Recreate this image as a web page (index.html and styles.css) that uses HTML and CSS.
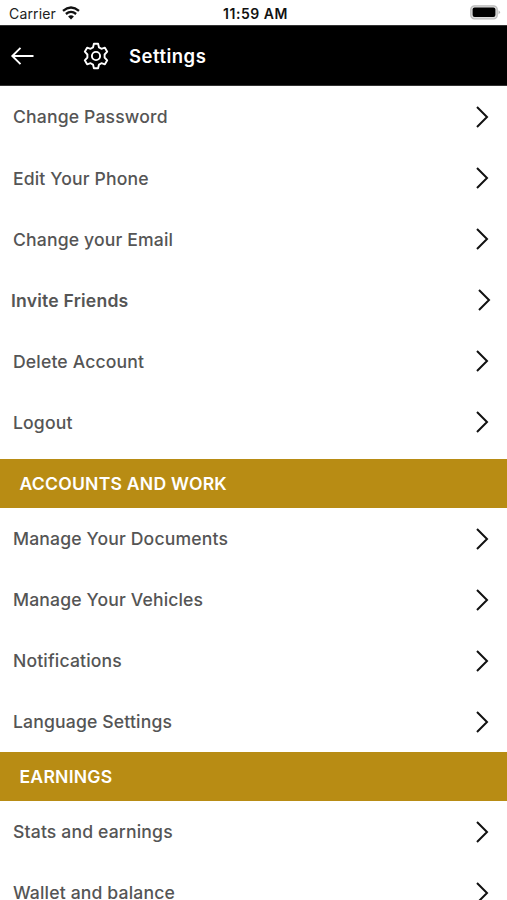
FILE: index.html
```html
<!DOCTYPE html>
<html lang="en">
<head>
<meta charset="utf-8">
<title>Settings</title>
<link rel="stylesheet" href="styles.css">
</head>
<body>
<svg class="defs" aria-hidden="true"><symbol id="chev" viewBox="0 0 14 24"><path d="M2 2l10 10L2 22" fill="none" stroke="#111" stroke-width="2"/></symbol></svg>
<div class="status">
  <div class="carrier"><span>Carrier</span>
    <svg class="wifi" viewBox="0 0 18 14"><g fill="none" stroke="#111" stroke-width="2.3"><path d="M1 4.800Q9-1.900 17 4.800"/><path d="M3.900 8Q9 3.700 14.100 8"/></g><path d="M6.100 10.500Q9 8 11.900 10.500L9 13.600z" fill="#111"/></svg>
  </div>
  <div class="time">11:59 AM</div>
  <svg class="battery" viewBox="0 0 31 15"><rect x=".8" y=".8" width="26.400" height="13" rx="3.600" fill="#ddd" stroke="#bbb" stroke-width="1.300"/><rect x="2.600" y="2.600" width="22.800" height="9.400" rx="2" fill="#000"/><path d="M28.500 5.200q3 2.100 0 4.200z" fill="#b5b5b5"/></svg>
</div>
<header class="bar">
  <svg class="back" viewBox="0 0 24 20"><path d="M23.500 10H2.500M10.500 1.800L2.300 10l8.200 8.200" fill="none" stroke="#fff" stroke-width="1.900"/></svg>
  <svg class="gear" viewBox="0 0 26 28"><g fill="none" stroke="#fff" stroke-width="1.900" stroke-linejoin="round"><path d="M10.900 1.800h4.200l.9 3.600 2.400 1.400 3.500-1.100 2.300 4-2.600 2.800v3l2.600 2.800-2.300 4-3.500-1.100-2.400 1.400-.9 3.600h-4.200l-.9-3.600-2.400-1.400-3.500 1.100-2.300-4 2.600-2.800v-3L1.800 9.700l2.300-4 3.500 1.100 2.400-1.400z"/><circle cx="13" cy="14" r="4.100"/></g></svg>
  <h1>Settings</h1>
</header>
<main>
  <section class="rows">
    <a class="row"><span>Change Password</span><svg><use href="#chev"/></svg></a>
    <a class="row"><span>Edit Your Phone</span><svg><use href="#chev"/></svg></a>
    <a class="row"><span>Change your Email</span><svg><use href="#chev"/></svg></a>
    <a class="row invite"><span>Invite Friends</span><svg><use href="#chev"/></svg></a>
    <a class="row"><span>Delete Account</span><svg><use href="#chev"/></svg></a>
    <a class="row"><span>Logout</span><svg><use href="#chev"/></svg></a>
  </section>
  <h2 class="first">ACCOUNTS AND WORK</h2>
  <section class="rows">
    <a class="row"><span>Manage Your Documents</span><svg><use href="#chev"/></svg></a>
    <a class="row"><span>Manage Your Vehicles</span><svg><use href="#chev"/></svg></a>
    <a class="row"><span>Notifications</span><svg><use href="#chev"/></svg></a>
    <a class="row"><span>Language Settings</span><svg><use href="#chev"/></svg></a>
  </section>
  <h2 class="earnings">EARNINGS</h2>
  <section class="rows">
    <a class="row"><span>Stats and earnings</span><svg><use href="#chev"/></svg></a>
    <a class="row"><span>Wallet and balance</span><svg><use href="#chev"/></svg></a>
  </section>
</main>
</body>
</html>
```

FILE: styles.css
```css
* { box-sizing: border-box; }
html, body { height: 900px; overflow: hidden; }
body { margin: 0; background: #fff; font-family: Inter, "Liberation Sans", sans-serif; }
svg { display: block; flex: none; }
.defs { display: none; }
.status { height: 25.400px; display: grid; grid-template-columns: 1fr auto 1fr; align-items: center; padding: 2px 6px 0 9px; color: #222; font-size: 14px; }
.carrier { display: flex; align-items: center; gap: 6px; letter-spacing: .15px; }
.wifi { width: 18px; height: 14px; margin-top: -2px; }
.time { font-weight: 600; color: #111; letter-spacing: .55px; margin-right: -1px; }
.battery { width: 31px; height: 15px; justify-self: end; margin-top: -2px; }
.bar { height: 61px; display: flex; align-items: center; background: #000; padding-left: 10px; border-top: 1px solid #333; border-bottom: 1px solid #333; }
.back { width: 24px; height: 20px; }
.gear { width: 26px; height: 28px; margin-left: 49px; }
h1 { margin: 0 0 0 20px; color: #fff; font-size: 18.500px; font-weight: 600; line-height: 24px; letter-spacing: .5px; }
.row { height: 61.100px; display: flex; align-items: center; justify-content: space-between; padding: 0 18px 0 13px; color: #555; font-size: 17.600px; font-weight: 500; letter-spacing: .15px; }
.row svg { width: 14px; height: 24px; }
.row.invite { padding: 0 16px 0 11px; font-weight: 600; letter-spacing: .2px; }
h2 { margin: 0; height: 49px; display: flex; align-items: center; padding-left: 19.500px; background: #b88c14; color: #fff; font-size: 17.600px; font-weight: 600; letter-spacing: .22px; }
h2.first { margin-top: 6px; }
```
